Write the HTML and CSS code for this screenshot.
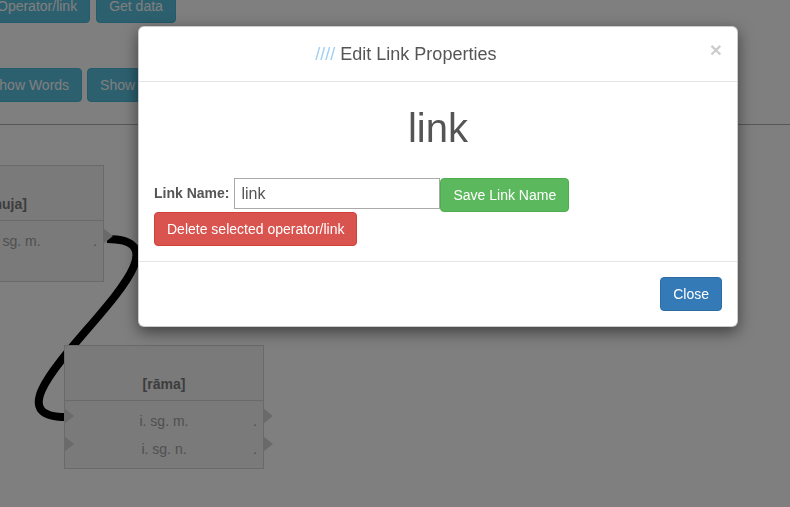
FILE: index.html
```html
<!DOCTYPE html>
<html>
<head>
<meta charset="utf-8">
<link rel="stylesheet" href="styles.css">
</head>
<body>
<div class="page">
  <div class="toolbar toolbar-top">
    <button class="btn btn-info">Operator/link</button>
    <button class="btn btn-info">Get data</button>
  </div>
  <div class="toolbar toolbar-second">
    <button class="btn btn-info">Show Words</button>
    <button class="btn btn-info">Show Links</button>
  </div>
  <div class="divider"></div>
  <div class="canvas">
    <svg class="links" width="790" height="400" viewBox="0 0 790 400">
      <path d="M107 114 C 222 114, -44 292, 66 292" fill="none" stroke="#000" stroke-width="8"/>
    </svg>
    <div class="operator op-first">
      <div class="op-title">[anuja]</div>
      <div class="op-body">
        <div class="op-row"><span></span><span class="op-label">nom. sg. m.</span><span class="op-dot">.</span><i class="conn conn-out"></i></div>
        <div class="op-spacer"></div>
      </div>
    </div>
    <div class="operator op-second">
      <div class="op-title">[rāma]</div>
      <div class="op-body">
        <div class="op-row"><i class="conn conn-in"></i><span></span><span class="op-label">i. sg. m.</span><span class="op-dot">.</span><i class="conn conn-out"></i></div>
        <div class="op-row"><i class="conn conn-in"></i><span></span><span class="op-label">i. sg. n.</span><span class="op-dot">.</span><i class="conn conn-out"></i></div>
      </div>
    </div>
  </div>
</div>
<div class="backdrop"></div>
<div class="modal">
  <div class="modal-header">
    <h4 class="modal-title"><span class="slashes">////</span> Edit Link Properties</h4>
    <span class="close">×</span>
  </div>
  <div class="modal-body">
    <h1 class="link-heading">link</h1>
    <div class="name-row">
      <label class="name-label">Link Name:</label>
      <input class="name-input" type="text" value="link">
      <button class="btn btn-success">Save Link Name</button>
    </div>
    <button class="btn btn-danger">Delete selected operator/link</button>
  </div>
  <div class="modal-footer">
    <button class="btn btn-primary">Close</button>
  </div>
</div>
</body>
</html>
```
FILE: styles.css
```css
* { box-sizing: border-box; }
html, body { margin: 0; padding: 0; }
body {
  width: 790px;
  height: 507px;
  overflow: hidden;
  background: #fff;
  font-family: "Liberation Sans", Arial, sans-serif;
  font-size: 14px;
  line-height: 20px;
  color: #333;
}
.page { width: 790px; }
.btn {
  font-family: inherit;
  font-size: 14px;
  line-height: 20px;
  padding: 6px 12px;
  border: 1px solid transparent;
  border-radius: 4px;
  color: #fff;
  white-space: nowrap;
  flex: none;
  margin: 0;
}
.btn-info { background: #5bc0de; border-color: #46b8da; }
.btn-success { background: #5cb85c; border-color: #4cae4c; }
.btn-danger { background: #d9534f; border-color: #d43f3a; }
.btn-primary { background: #337ab7; border-color: #2e6da4; }

.toolbar { display: flex; }
.toolbar-top { margin-top: -11px; margin-left: -16px; gap: 6px; }
.toolbar-second { margin-top: 45px; margin-left: -23px; gap: 5px; }
.divider { margin-top: 22px; border-top: 1px solid #aeaeae; }

.canvas { position: relative; height: 400px; }
.links { position: absolute; left: 0; top: 0; }
.operator {
  position: absolute;
  width: 200px;
  background: #f4f4f4;
  border: 1px solid #d4d4d4;
}
.op-first { left: -96px; top: 40px; }
.op-second { left: 64px; top: 220px; }
.op-title {
  height: 55px;
  border-bottom: 1px solid #d4d4d4;
  display: flex;
  align-items: flex-end;
  justify-content: center;
  padding-bottom: 6px;
  font-weight: bold;
  color: #7a7a7a;
}
.op-body { padding: 10px 0 1px; }
.op-row {
  position: relative;
  height: 20px;
  margin-bottom: 8px;
  display: grid;
  grid-template-columns: 1fr auto 1fr;
  color: #a0a0a0;
}
.op-spacer { height: 21px; }
.op-label { white-space: nowrap; }
.op-dot { text-align: right; padding-right: 6px; }
.conn {
  position: absolute;
  top: -3px;
  width: 0;
  height: 0;
  border-top: 8px solid transparent;
  border-bottom: 8px solid transparent;
  border-left: 10px solid #d4d4d4;
}
.conn-in { left: -1px; }
.conn-out { left: 100%; }

.backdrop {
  position: fixed;
  left: 0; top: 0; right: 0; bottom: 0;
  background: rgba(0, 0, 0, 0.5);
}
.modal {
  position: absolute;
  left: 138px;
  top: 26px;
  width: 600px;
  background: #fff;
  border: 1px solid rgba(0, 0, 0, 0.2);
  border-radius: 6px;
  box-shadow: 0 5px 15px rgba(0, 0, 0, 0.5);
}
.modal-header {
  display: flex;
  align-items: flex-start;
  padding: 15px;
  border-bottom: 1px solid #e5e5e5;
}
.modal-title {
  flex: 1;
  margin: 0;
  padding-right: 52px;
  text-align: center;
  font-size: 18px;
  line-height: 24px;
  font-weight: normal;
  color: #555;
}
.slashes { color: #9fd0f5; }
.close {
  font-size: 21px;
  font-weight: bold;
  line-height: 1;
  color: #000;
  opacity: 0.2;
  margin-top: -3px;
}
.modal-body { padding: 15px; }
.link-heading {
  margin: 9px 0 28px;
  text-align: center;
  font-size: 40px;
  line-height: 44px;
  font-weight: normal;
  color: #555;
}
.name-row { display: flex; align-items: flex-start; }
.name-label {
  font-weight: bold;
  line-height: 31px;
  color: #555;
  margin-right: 5px;
}
.name-input {
  width: 206px;
  height: 31px;
  border: 1px solid #a9a9a9;
  padding: 0 6px;
  font-family: inherit;
  font-size: 16px;
  color: #555;
  margin: 0;
}
.modal-footer {
  padding: 15px;
  border-top: 1px solid #e5e5e5;
  text-align: right;
}
```
